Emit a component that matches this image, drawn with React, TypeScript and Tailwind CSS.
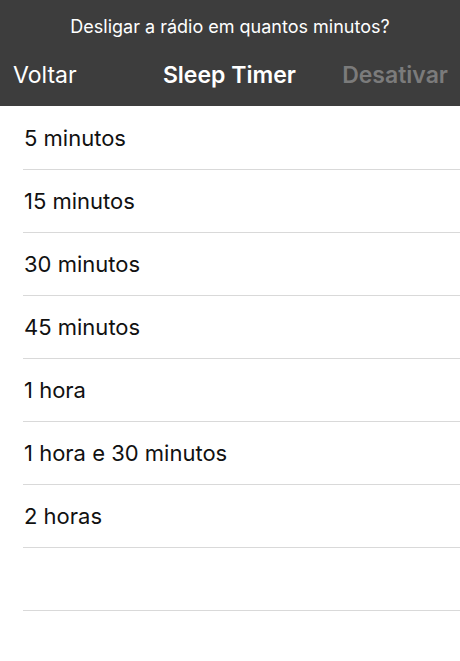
const options = [
  "5 minutos",
  "15 minutos",
  "30 minutos",
  "45 minutos",
  "1 hora",
  "1 hora e 30 minutos",
  "2 horas",
  "",
];

export default function App() {
  return (
    <div className="min-h-[661px] bg-white font-['Inter',sans-serif]">
      {/* Header */}
      <header className="h-[106px] bg-[#3d3d3d] flex flex-col">
        <p className="pt-[14px] text-center text-[18px] leading-[26px] text-white">
          Desligar a rádio em quantos minutos?
        </p>
        <div className="mt-[20px] flex items-center justify-between pl-[13px] pr-[12px]">
          <button className="text-[23px] leading-[30px] text-white">Voltar</button>
          <h1 className="text-[23px] leading-[30px] font-semibold text-white pl-[40px]">
            Sleep Timer
          </h1>
          <button className="text-[23px] leading-[30px] font-semibold text-[#7b7b7b]">
            Desativar
          </button>
        </div>
      </header>

      {/* Options */}
      <ul className="pl-[23px] pt-px">
        {options.map((label, i) => (
          <li
            key={i}
            className="h-[63px] flex items-center border-b border-[#d9d9d9] text-[22px] text-[#111111]"
          >
            <span className="pl-px">{label}</span>
          </li>
        ))}
      </ul>
    </div>
  );
}
